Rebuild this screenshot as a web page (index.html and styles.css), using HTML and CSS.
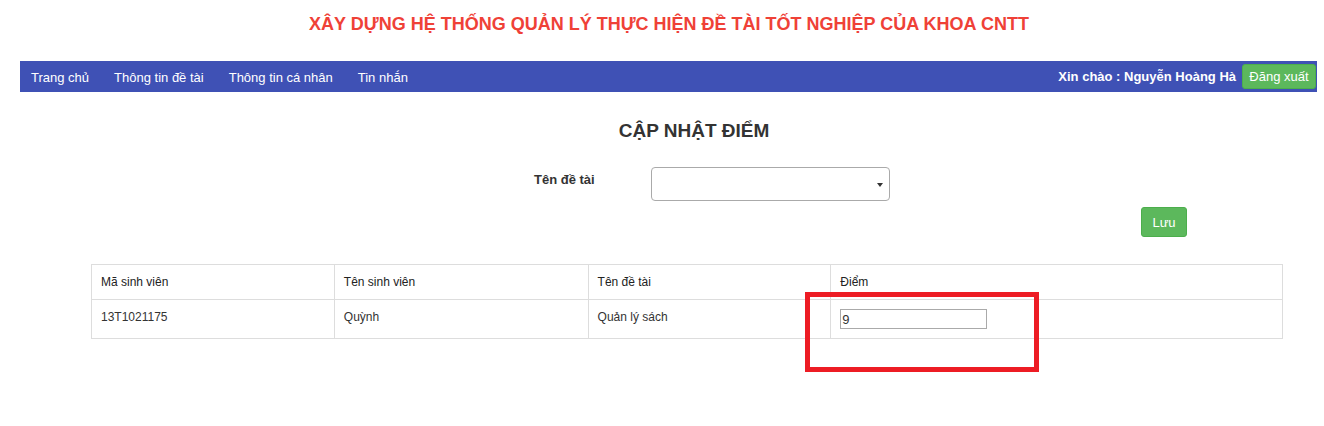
FILE: index.html
```html
<!DOCTYPE html>
<html lang="vi">
<head>
<meta charset="utf-8">
<title>Cập nhật điểm</title>
<link rel="stylesheet" href="styles.css">
</head>
<body>
<header class="site-title">XÂY DỰNG HỆ THỐNG QUẢN LÝ THỰC HIỆN ĐỀ TÀI TỐT NGHIỆP CỦA KHOA CNTT</header>
<nav class="navbar">
  <ul class="nav-links">
    <li><a href="#">Trang chủ</a></li>
    <li><a href="#">Thông tin đề tài</a></li>
    <li><a href="#">Thông tin cá nhân</a></li>
    <li><a href="#">Tin nhắn</a></li>
  </ul>
  <div class="nav-user">
    <span class="greeting">Xin chào : Nguyễn Hoàng Hà</span>
    <button class="btn btn-green btn-logout">Đăng xuất</button>
  </div>
</nav>
<main class="content">
  <h2 class="page-title">CẬP NHẬT ĐIỂM</h2>
  <div class="form-row">
    <label class="form-label">Tên đề tài</label>
    <div class="select-box"><span class="caret"></span></div>
  </div>
  <div class="actions">
    <button class="btn btn-green btn-save">Lưu</button>
  </div>
  <table class="grade-table">
    <thead>
      <tr>
        <th class="c1">Mã sinh viên</th>
        <th class="c2">Tên sinh viên</th>
        <th class="c3">Tên đề tài</th>
        <th class="c4">Điểm</th>
      </tr>
    </thead>
    <tbody>
      <tr>
        <td>13T1021175</td>
        <td>Quỳnh</td>
        <td>Quản lý sách</td>
        <td class="score-cell"><span class="score-input">9</span><span class="highlight"></span></td>
      </tr>
    </tbody>
  </table>
</main>
</body>
</html>
```

FILE: styles.css
```css
* { box-sizing: border-box; }
body {
  margin: 0;
  font-family: "Liberation Sans", Arial, sans-serif;
  color: #333;
  background: #fff;
  width: 1324px;
  height: 426px;
  overflow: hidden;
}
.site-title {
  height: 61px;
  padding-top: 14px;
  padding-left: 14px;
  text-align: center;
  color: #ef4137;
  font-weight: bold;
  font-size: 18px;
}
.navbar {
  margin: 0 7px 0 20px;
  height: 31px;
  background: #3f51b5;
  display: flex;
  align-items: center;
  justify-content: space-between;
}
.nav-links {
  list-style: none;
  margin: 0;
  padding: 0 0 0 11px;
  display: flex;
  gap: 25px;
}
.nav-links a {
  color: #fff;
  text-decoration: none;
  font-size: 13px;
}
.nav-user {
  display: flex;
  align-items: center;
  gap: 6px;
  padding-right: 1px;
}
.greeting {
  color: #fff;
  font-weight: bold;
  font-size: 13px;
}
.btn {
  border: 1px solid #4cae4c;
  background: #5cb85c;
  color: #fff;
  font-family: "Liberation Sans", Arial, sans-serif;
  font-size: 13px;
  border-radius: 3px;
  padding: 0;
  cursor: pointer;
}
.btn-logout {
  width: 74px;
  height: 25px;
}
.content {
  padding: 0 42px 0 91px;
}
.page-title {
  margin: 0;
  padding-top: 28px;
  padding-left: 15px;
  height: 75px;
  text-align: center;
  font-size: 19px;
  font-weight: bold;
  color: #333;
}
.form-row {
  display: flex;
  margin-left: 443px;
}
.form-label {
  width: 117px;
  font-size: 13px;
  font-weight: bold;
  padding-top: 5px;
}
.select-box {
  width: 239px;
  height: 34px;
  border: 1px solid #aaa;
  border-radius: 4px;
  position: relative;
}
.caret {
  position: absolute;
  right: 6px;
  top: 15px;
  border-left: 3px solid transparent;
  border-right: 3px solid transparent;
  border-top: 4px solid #333;
}
.actions {
  display: flex;
  justify-content: flex-end;
  padding-right: 95px;
  margin-top: 6px;
  height: 57px;
}
.btn-save {
  width: 46px;
  height: 30px;
}
.grade-table {
  width: 1192px;
  border-collapse: collapse;
  font-size: 12px;
}
.grade-table th,
.grade-table td {
  border: 1px solid #ddd;
  text-align: left;
  vertical-align: top;
  padding: 10px 9px;
}
.grade-table th {
  font-weight: normal;
  color: #222;
  height: 35px;
}
.grade-table td {
  height: 39px;
  padding-top: 10px;
  padding-bottom: 7px;
}
.grade-table td.score-cell {
  padding-top: 9px;
}
.c1 { width: 243px; }
.c2 { width: 254px; }
.c3 { width: 243px; }
.c4 { width: 452px; }
.score-cell { position: relative; }
.score-input {
  display: block;
  width: 147px;
  height: 20px;
  border: 1px solid #aaa;
  padding: 2px 0 0 1px;
  font-size: 13px;
  line-height: 15px;
}
.highlight {
  position: absolute;
  left: -26px;
  top: -8px;
  width: 234px;
  height: 80px;
  border: 5px solid #ed1c24;
}
```
